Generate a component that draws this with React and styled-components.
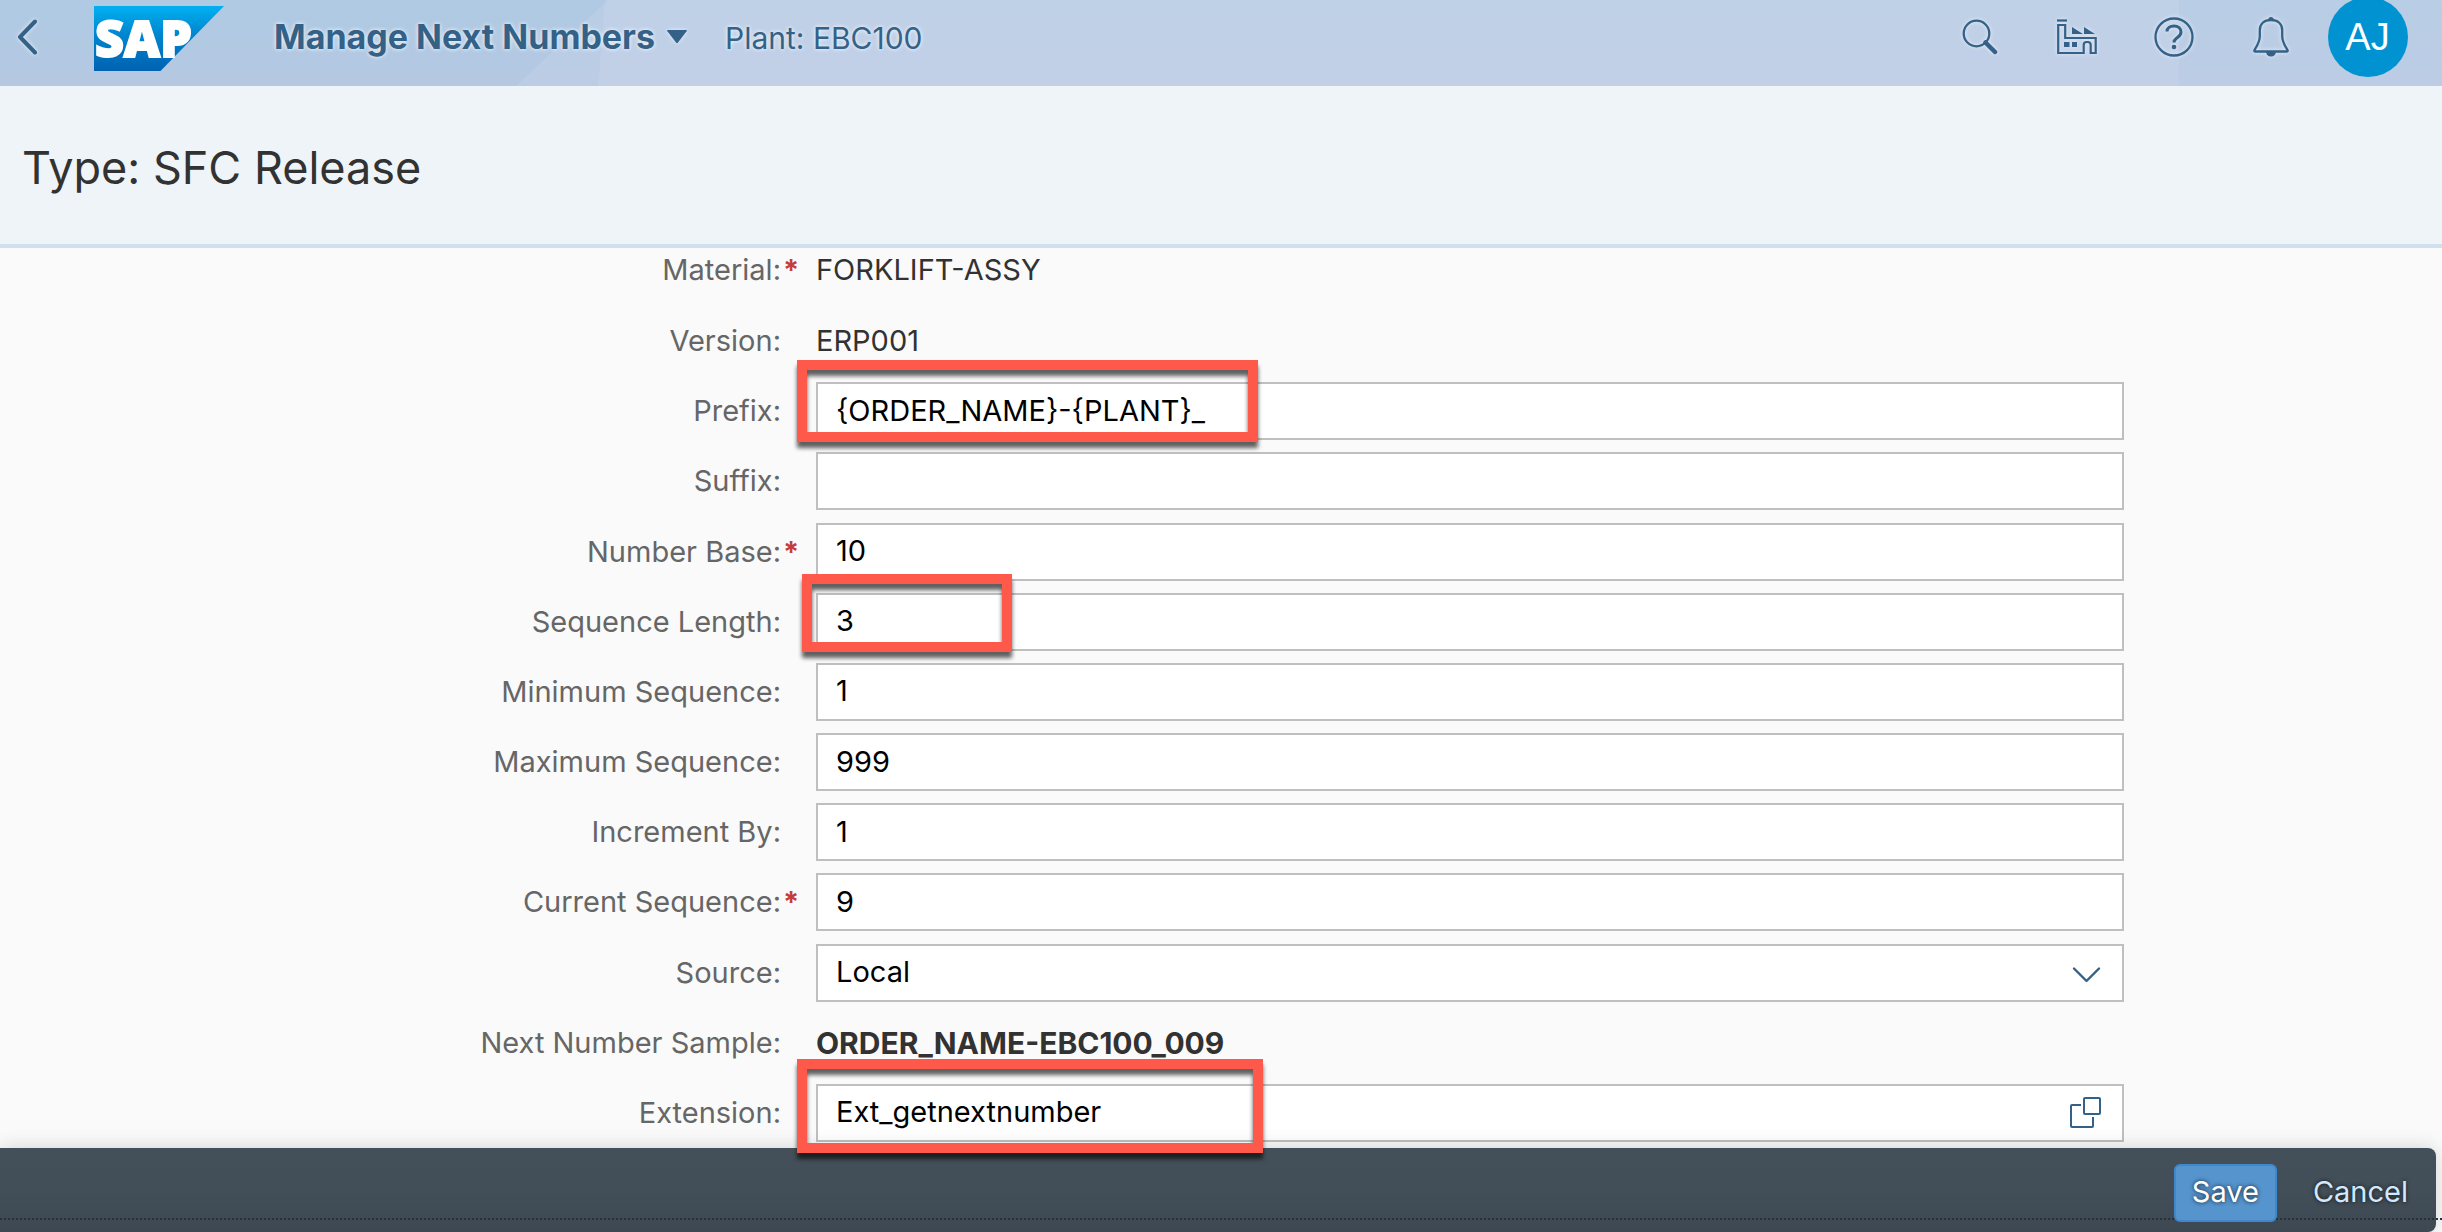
import React from 'react';
import styled, { createGlobalStyle, css } from 'styled-components';

const GlobalStyle = createGlobalStyle`
  *, *::before, *::after { box-sizing: border-box; }
  body {
    margin: 0;
    background: #fafafa;
    font-family: Inter, "Liberation Sans", sans-serif;
    font-size: 29px;
    line-height: 36px;
    color: #323232;
  }
  button, input, select { font: inherit; }
`;

const Page = styled.div`
  display: flex;
  flex-direction: column;
  min-height: 100vh;
`;

/* Shell bar */

const ShellBar = styled.header`
  position: relative;
  display: flex;
  align-items: center;
  justify-content: space-between;
  height: 86px;
  padding: 0 26px 10px 0;
  background: linear-gradient(#afcae2, #b5c8e2);
  color: #346187;
  isolation: isolate;

  &::before,
  &::after {
    content: '';
    position: absolute;
    z-index: -1;
    top: 0;
    bottom: 0;
    right: 0;
    background: rgba(206, 216, 236, 0.32);
  }
  &::before {
    left: 516px;
    clip-path: polygon(92px 0, 100% 0, 100% 100%, 0 100%);
  }
  &::after {
    left: 598px;
    right: 263px;
    clip-path: polygon(7px 0, 100% 0, 100% 100%, 0 100%);
  }
`;

const ShellGroup = styled.div`
  display: flex;
  align-items: center;
`;

const glow = css`
  filter: drop-shadow(0 0 2px rgba(255, 255, 255, 0.7));
`;

const ShellButton = styled.button`
  display: flex;
  align-items: center;
  justify-content: center;
  width: ${(p) => p.$width || 97}px;
  height: 74px;
  padding: 0 0 2px;
  border: 0;
  background: none;
  color: inherit;
  cursor: pointer;

  svg { ${glow} }
`;

const LogoLink = styled.a`
  display: flex;
  margin-left: 38px;

  svg { overflow: visible; }
`;

const TitleButton = styled.button`
  display: flex;
  align-items: center;
  gap: 12px;
  margin-left: 50px;
  padding: 0 0 2px;
  border: 0;
  background: none;
  color: inherit;
  font-size: 34px;
  font-weight: 700;
  cursor: pointer;
  text-shadow: 0 0 4px #fff;

  svg { ${glow} }
`;

const PlantName = styled.span`
  margin-left: 38px;
  font-size: 30px;
  text-shadow: 0 0 4px #fff;
`;

const Avatar = styled.span`
  display: flex;
  flex: none;
  align-items: center;
  justify-content: center;
  width: 80px;
  height: 80px;
  border-radius: 50%;
  background: #0092d1;
  color: #fff;
  font-family: "Liberation Sans", Arial, sans-serif;
  font-size: 38px;
`;

/* Page title */

const TitleArea = styled.div`
  display: flex;
  align-items: center;
  height: 162px;
  padding: 6px 22px 0;
  background: #eff4f9;
  border-bottom: 4px solid #d1e0ee;
`;

const PageTitle = styled.h1`
  margin: 0;
  font-size: 45px;
  font-weight: 400;
  line-height: 54px;
`;

/* Form */

const Form = styled.form`
  flex: 1;
  display: grid;
  grid-template-rows: 58px;
  grid-auto-rows: minmax(70px, 1fr);
`;

const Row = styled.div`
  display: grid;
  grid-template-columns: 136fr 218fr 53fr;
  align-items: center;

  &:first-child {
    align-items: start;
    padding-top: 4px;
  }
`;

const Label = styled.label`
  display: flex;
  justify-content: flex-end;
  color: #666;
  white-space: nowrap;

  &::after {
    content: '${(p) => (p.$required ? '*' : '')}';
    width: 35px;
    padding-left: 2px;
    color: #c43c3c;
    font-weight: 700;
  }
`;

const Field = styled.div`
  position: relative;
  display: flex;
  align-items: center;
`;

const Value = styled.output`
  font-size: ${(p) => (p.$strong ? 30 : 29)}px;
  font-weight: ${(p) => (p.$strong ? 700 : 400)};
`;

const control = css`
  width: 100%;
  height: 58px;
  margin: 0;
  padding: 0 72px 2px 18px;
  border: 2px solid #bfbfbf;
  border-radius: 0;
  background: #fff;
  color: #000;
  outline: none;

  &:focus { border-color: #346187; }
`;

const Input = styled.input`${control}`;

const Select = styled.select`
  ${control}
  appearance: none;
`;

const FieldIcon = styled.span`
  position: absolute;
  right: 22px;
  display: flex;
  color: #346187;
  pointer-events: none;
`;

const FieldButton = styled.button`
  position: absolute;
  right: 22px;
  display: flex;
  padding: 0;
  border: 0;
  background: none;
  color: #346187;
  cursor: pointer;
`;

const Highlight = styled.span`
  position: absolute;
  z-index: 3;
  left: ${(p) => p.$left}px;
  top: ${(p) => p.$top}px;
  width: ${(p) => p.$width}px;
  height: ${(p) => p.$height}px;
  border: 10px solid #ff594b;
  filter: drop-shadow(0 6px 2px rgba(0, 0, 0, 0.62));
  pointer-events: none;
`;

/* Footer */

const FooterArea = styled.div`
  position: relative;
  z-index: 2;
  padding-right: 6px;

  &::after {
    content: '';
    position: absolute;
    left: 0;
    right: 0;
    bottom: 12px;
    height: 2px;
    background: repeating-linear-gradient(90deg, #27313a 0 2px, transparent 2px 4px);
  }
`;

const Footer = styled.footer`
  display: flex;
  align-items: center;
  justify-content: flex-end;
  gap: 18px;
  height: 84px;
  padding: 6px 10px 0;
  border-radius: 0 8px 8px 0;
  background: linear-gradient(#445059, #434f58 50%, #3d4852);
  box-shadow: 0 0 20px rgba(0, 0, 0, 0.16);
`;

const FooterButton = styled.button`
  position: relative;
  z-index: 1;
  height: 58px;
  padding: 0 16px 2px;
  border: 2px solid ${(p) => (p.$primary ? '#3f88cc' : 'transparent')};
  border-radius: 6px;
  background: ${(p) => (p.$primary ? '#5594cd' : 'transparent')};
  color: ${(p) => (p.$primary ? '#fff' : '#d1e8ff')};
  text-shadow: 0 0 4px rgba(0, 0, 0, 0.8);
  cursor: pointer;
`;

/* Icons */

const BackIcon = () => (
  <svg width="22" height="36" viewBox="0 0 22 36" fill="none" stroke="currentColor" strokeWidth="4" strokeLinecap="round" strokeLinejoin="round" aria-hidden="true">
    <path d="M18 2.500 3 18l15 15.500" />
  </svg>
);

const SapLogo = () => (
  <svg width="130" height="65" viewBox="0 0 130 65" role="img" aria-label="SAP">
    <defs>
      <linearGradient id="sapBlue" x1="0" y1="0" x2="0" y2="1">
        <stop offset="0" stopColor="#00b0f0" />
        <stop offset="0.45" stopColor="#0085cf" />
        <stop offset="1" stopColor="#0062b1" />
      </linearGradient>
    </defs>
    <path d="M0 0h130L66.500 65H0z" fill="url(#sapBlue)" />
    <text x="1" y="51" fill="#fff" stroke="#fff" strokeWidth="2" fontFamily="Open Sans, sans-serif" fontWeight="800" fontSize="50">SAP</text>
  </svg>
);

const TriangleIcon = () => (
  <svg width="20" height="14" viewBox="0 0 20 14" fill="currentColor" aria-hidden="true">
    <path d="M1 0h18q1.500 0 .6 1.300L11 12.600q-1 1-2 0L.4 1.300Q-.5 0 1 0z" />
  </svg>
);

const SearchIcon = () => (
  <svg width="36" height="36" viewBox="0 0 36 36" fill="none" stroke="currentColor" aria-hidden="true">
    <circle cx="14.500" cy="14.500" r="12.800" strokeWidth="2.300" />
    <path d="M23.500 23.500 33 33" strokeWidth="4.500" strokeLinecap="round" />
  </svg>
);

const FactoryIcon = () => (
  <svg width="40" height="36" viewBox="0 0 40 36" fill="none" stroke="currentColor" strokeWidth="2.200" aria-hidden="true">
    <path d="M0 1.500h10" />
    <path d="M1.200 6h7v13h30.500v15h-5V26q0-3-3-3h-1q-3 0-3 3v8H1.200z" />
    <path d="M15 8v7h11zM27 8v7h11zM7 23h5.500v5H7zM15 23h5v5h-5z" fill="currentColor" stroke="none" />
  </svg>
);

const HelpIcon = () => (
  <svg width="40" height="40" viewBox="0 0 40 40" fill="none" stroke="currentColor" aria-hidden="true">
    <circle cx="20" cy="20" r="18.500" strokeWidth="2.300" />
    <path d="M13 14.500C13 11 16 9 20 9s7 2.500 7 6-2 4.500-4.500 6.200Q20 23 20 25.500" strokeWidth="3" />
    <circle cx="20" cy="30" r="2.300" fill="currentColor" stroke="none" />
  </svg>
);

const BellIcon = () => (
  <svg width="36" height="40" viewBox="0 0 36 40" fill="none" stroke="currentColor" strokeWidth="2.300" strokeLinejoin="round" aria-hidden="true">
    <path d="M18 3C11 3 6.800 7 6.800 13v6C6.800 25 4 29 1.500 33q-.7 1.500 1 1.500h31q1.700 0 1-1.500c-2.500-4-5.300-8-5.300-14v-6C29.200 7 25 3 18 3z" />
    <path d="M15 3q.5-3 3-3t3 3zM13 34.500h10q-.5 5-5 5t-5-5z" fill="currentColor" stroke="none" />
  </svg>
);

const ChevronIcon = () => (
  <svg width="32" height="32" viewBox="0 0 32 32" fill="none" stroke="currentColor" strokeWidth="2.400" strokeLinecap="round" strokeLinejoin="round" aria-hidden="true">
    <path d="M4 11.500 16.500 24 29 11.500" />
  </svg>
);

const ValueHelpIcon = () => (
  <svg width="32" height="32" viewBox="0 0 32 32" fill="none" stroke="currentColor" strokeWidth="2" strokeLinejoin="round" aria-hidden="true">
    <rect x="14" y="1" width="16" height="16" rx="1" />
    <path d="M11 8H2q-1 0-1 1v20q0 1 1 1h20q1 0 1-1V20" />
  </svg>
);

const FIELDS = [
  { id: 'material', label: 'Material', required: true, kind: 'text', value: 'FORKLIFT-ASSY' },
  { id: 'version', label: 'Version', kind: 'text', value: 'ERP001' },
  { id: 'prefix', label: 'Prefix', value: '{ORDER_NAME}-{PLANT}_', mark: { $left: -19, $top: -22, $width: 461, $height: 82 } },
  { id: 'suffix', label: 'Suffix', value: '' },
  { id: 'base', label: 'Number Base', required: true, value: '10' },
  { id: 'length', label: 'Sequence Length', value: '3', mark: { $left: -14, $top: -19, $width: 210, $height: 78 } },
  { id: 'min', label: 'Minimum Sequence', value: '1' },
  { id: 'max', label: 'Maximum Sequence', value: '999' },
  { id: 'increment', label: 'Increment By', value: '1' },
  { id: 'current', label: 'Current Sequence', required: true, value: '9' },
  { id: 'source', label: 'Source', kind: 'select', value: 'Local' },
  { id: 'sample', label: 'Next Number Sample', kind: 'text', strong: true, value: 'ORDER_NAME-EBC100_009' },
  { id: 'extension', label: 'Extension', help: true, value: 'Ext_getnextnumber', mark: { $left: -19, $top: -25, $width: 466, $height: 94 } },
];

function FieldControl({ field }) {
  if (field.kind === 'text') {
    return <Value id={field.id} $strong={field.strong}>{field.value}</Value>;
  }
  if (field.kind === 'select') {
    return (
      <>
        <Select id={field.id} defaultValue={field.value}>
          <option>{field.value}</option>
        </Select>
        <FieldIcon><ChevronIcon /></FieldIcon>
      </>
    );
  }
  return <Input id={field.id} type="text" required={field.required} defaultValue={field.value} />;
}

export default function App() {
  return (
    <Page>
      <GlobalStyle />
      <ShellBar>
        <ShellGroup>
          <ShellButton type="button" $width={56} aria-label="Back"><BackIcon /></ShellButton>
          <LogoLink href="#home"><SapLogo /></LogoLink>
          <TitleButton type="button">Manage Next Numbers<TriangleIcon /></TitleButton>
          <PlantName>Plant: EBC100</PlantName>
        </ShellGroup>
        <ShellGroup>
          <ShellButton type="button" aria-label="Search"><SearchIcon /></ShellButton>
          <ShellButton type="button" aria-label="Plant"><FactoryIcon /></ShellButton>
          <ShellButton type="button" aria-label="Help"><HelpIcon /></ShellButton>
          <ShellButton type="button" aria-label="Notifications"><BellIcon /></ShellButton>
          <ShellButton type="button" aria-label="User menu"><Avatar>AJ</Avatar></ShellButton>
        </ShellGroup>
      </ShellBar>
      <TitleArea>
        <PageTitle>Type: SFC Release</PageTitle>
      </TitleArea>
      <Form id="numbers" onSubmit={(e) => e.preventDefault()}>
        {FIELDS.map((field) => (
          <Row key={field.id}>
            <Label htmlFor={field.id} $required={field.required}>{field.label}:</Label>
            <Field>
              <FieldControl field={field} />
              {field.help && (
                <FieldButton type="button" aria-label="Choose extension"><ValueHelpIcon /></FieldButton>
              )}
              {field.mark && <Highlight {...field.mark} />}
            </Field>
          </Row>
        ))}
      </Form>
      <FooterArea>
        <Footer>
          <FooterButton type="submit" form="numbers" $primary>Save</FooterButton>
          <FooterButton type="button">Cancel</FooterButton>
        </Footer>
      </FooterArea>
    </Page>
  );
}
